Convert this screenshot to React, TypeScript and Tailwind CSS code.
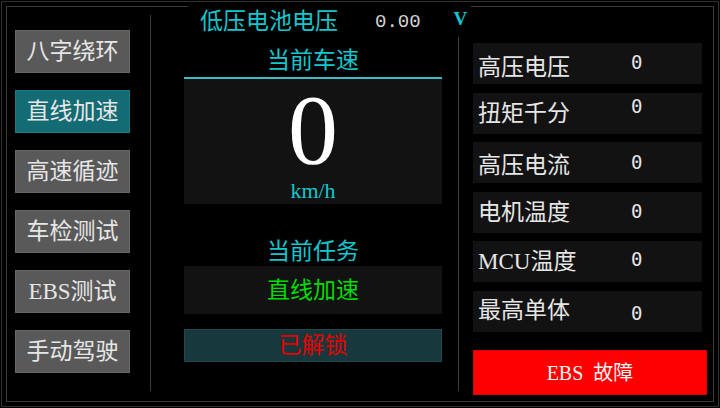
const FONT = "font-['Liberation_Mono','Noto_Sans_CJK_SC',monospace]";
const SERIF_LATIN = "font-['Liberation_Serif','Noto_Sans_CJK_SC',serif]";

const modes = [
  { name: "八字绕环", active: false },
  { name: "直线加速", active: true },
  { name: "高速循迹", active: false },
  { name: "车检测试", active: false },
  { name: "EBS测试", active: false },
  { name: "手动驾驶", active: false },
];

// label / value offsets differ per row on the device screen
const readings = [
  { label: "高压电压", value: "0", lp: "pt-[13px]", vp: "pt-[10px]" },
  { label: "扭矩千分", value: "0", lp: "pt-[9px]", vp: "pt-[4px]" },
  { label: "高压电流", value: "0", lp: "pt-[12px]", vp: "pt-[11px]" },
  { label: "电机温度", value: "0", lp: "pt-[9px]", vp: "pt-[10px]" },
  { label: "MCU温度", value: "0", lp: "pt-[9px]", vp: "pt-[9px]" },
  { label: "最高单体", value: "0", lp: "pt-[8px]", vp: "pt-[13px]" },
];

const ModeButton = ({ name, active }: { name: string; active: boolean }) => (
  <div
    className={`flex h-[43px] w-[115px] items-center justify-center border text-[23px] leading-none text-[#e6e6e6] ${SERIF_LATIN} ${
      active ? "border-[#1c7a82] bg-[#136b73]" : "border-[#676767] bg-[#595959]"
    }`}
  >
    {name}
  </div>
);

const ReadingRow = ({
  label,
  value,
  lp,
  vp,
}: {
  label: string;
  value: string;
  lp: string;
  vp: string;
}) => (
  <div className="flex h-[41px] w-[229px] items-start bg-[#121212] pl-[5px] text-[#e6e6e6]">
    <span className={`w-[153px] text-[23px] leading-none ${SERIF_LATIN} ${lp}`}>{label}</span>
    <span
      className={`font-['DejaVu_Sans_Mono',monospace] text-[19px] leading-none ${vp}`}
    >
      {value}
    </span>
  </div>
);

export default function App() {
  return (
    <div className={`h-[408px] w-[720px] bg-black p-px ${FONT}`}>
      <div className="h-full border border-[#303030] p-[4px]">
        {/* group frame */}
        <div className="flex h-full border border-[#3a3a3a]">
          {/* mode selection */}
          <div className="flex w-[144px]">
            <div className="flex w-[143px] flex-col gap-[17px] pl-[8px] pt-[23px]">
              {modes.map((m) => (
                <ModeButton key={m.name} name={m.name} active={m.active} />
              ))}
            </div>
            <div className="mb-[10px] mt-[8px] w-px bg-[#3e3e3e]" />
          </div>

          {/* speed and task */}
          <div className="flex w-[307px] flex-col">
            <div className="-mt-px ml-[37px] flex h-[31px] w-[283px] shrink-0 items-start whitespace-nowrap bg-black">
              <span className="ml-[12px] mt-[6px] text-[23px] leading-none text-[#14c6cd]">
                低压电池电压
              </span>
              <span className="ml-[37px] mt-[7px] text-[19px] leading-none text-[#d4d4d4]">
                0.00
              </span>
              <span
                className={`ml-[33px] mt-[3px] text-[19px] font-bold leading-none text-[#14c6cd] ${SERIF_LATIN}`}
              >
                V
              </span>
            </div>

            <div className="ml-[33px] mr-[16px] flex flex-col">
              <div className="mt-[14px] text-center text-[23px] leading-none text-[#14c6cd]">
                当前车速
              </div>
              <div className="mt-[3px] h-[2px] bg-[#3fbcc2]" />
              <div className="flex h-[125px] flex-col items-center bg-[#121212]">
                <span className="mt-[3px] font-['Liberation_Serif',serif] text-[100px] leading-[96px] text-white">
                  0
                </span>
                <span className={`mt-[2px] text-[22px] leading-none text-[#14c6cd] ${SERIF_LATIN}`}>
                  km/h
                </span>
              </div>

              <div className="mt-[38px] text-center text-[23px] leading-none text-[#14c6cd]">
                当前任务
              </div>
              <div className="mt-[1px] h-[48px] bg-[#121212] pt-[15px] text-center text-[23px] leading-none text-[#00dc00]">
                直线加速
              </div>
              <div className="mt-[15px] h-[33px] border border-[#22474c] bg-[#17383d] pt-[6px] text-center text-[23px] leading-none text-[#e60000]">
                已解锁
              </div>
            </div>
          </div>

          {/* vehicle readings */}
          <div className="flex flex-1">
            <div className="mb-[10px] mt-[30px] w-px bg-[#3e3e3e]" />
            <div className="flex flex-1 flex-col pl-[14px] pr-[6px] pt-[36px]">
              <div className="flex flex-col gap-[8.5px]">
                {readings.map((r) => (
                  <ReadingRow key={r.label} {...r} />
                ))}
              </div>
              <div
                className={`mt-[18.5px] flex h-[45px] items-center justify-center gap-[10px] border border-[#d80000] bg-[#ff0000] text-[20px] leading-none text-[#f4f4f4] ${SERIF_LATIN}`}
              >
                <span>EBS</span>
                <span>故障</span>
              </div>
            </div>
          </div>
        </div>
      </div>
    </div>
  );
}
